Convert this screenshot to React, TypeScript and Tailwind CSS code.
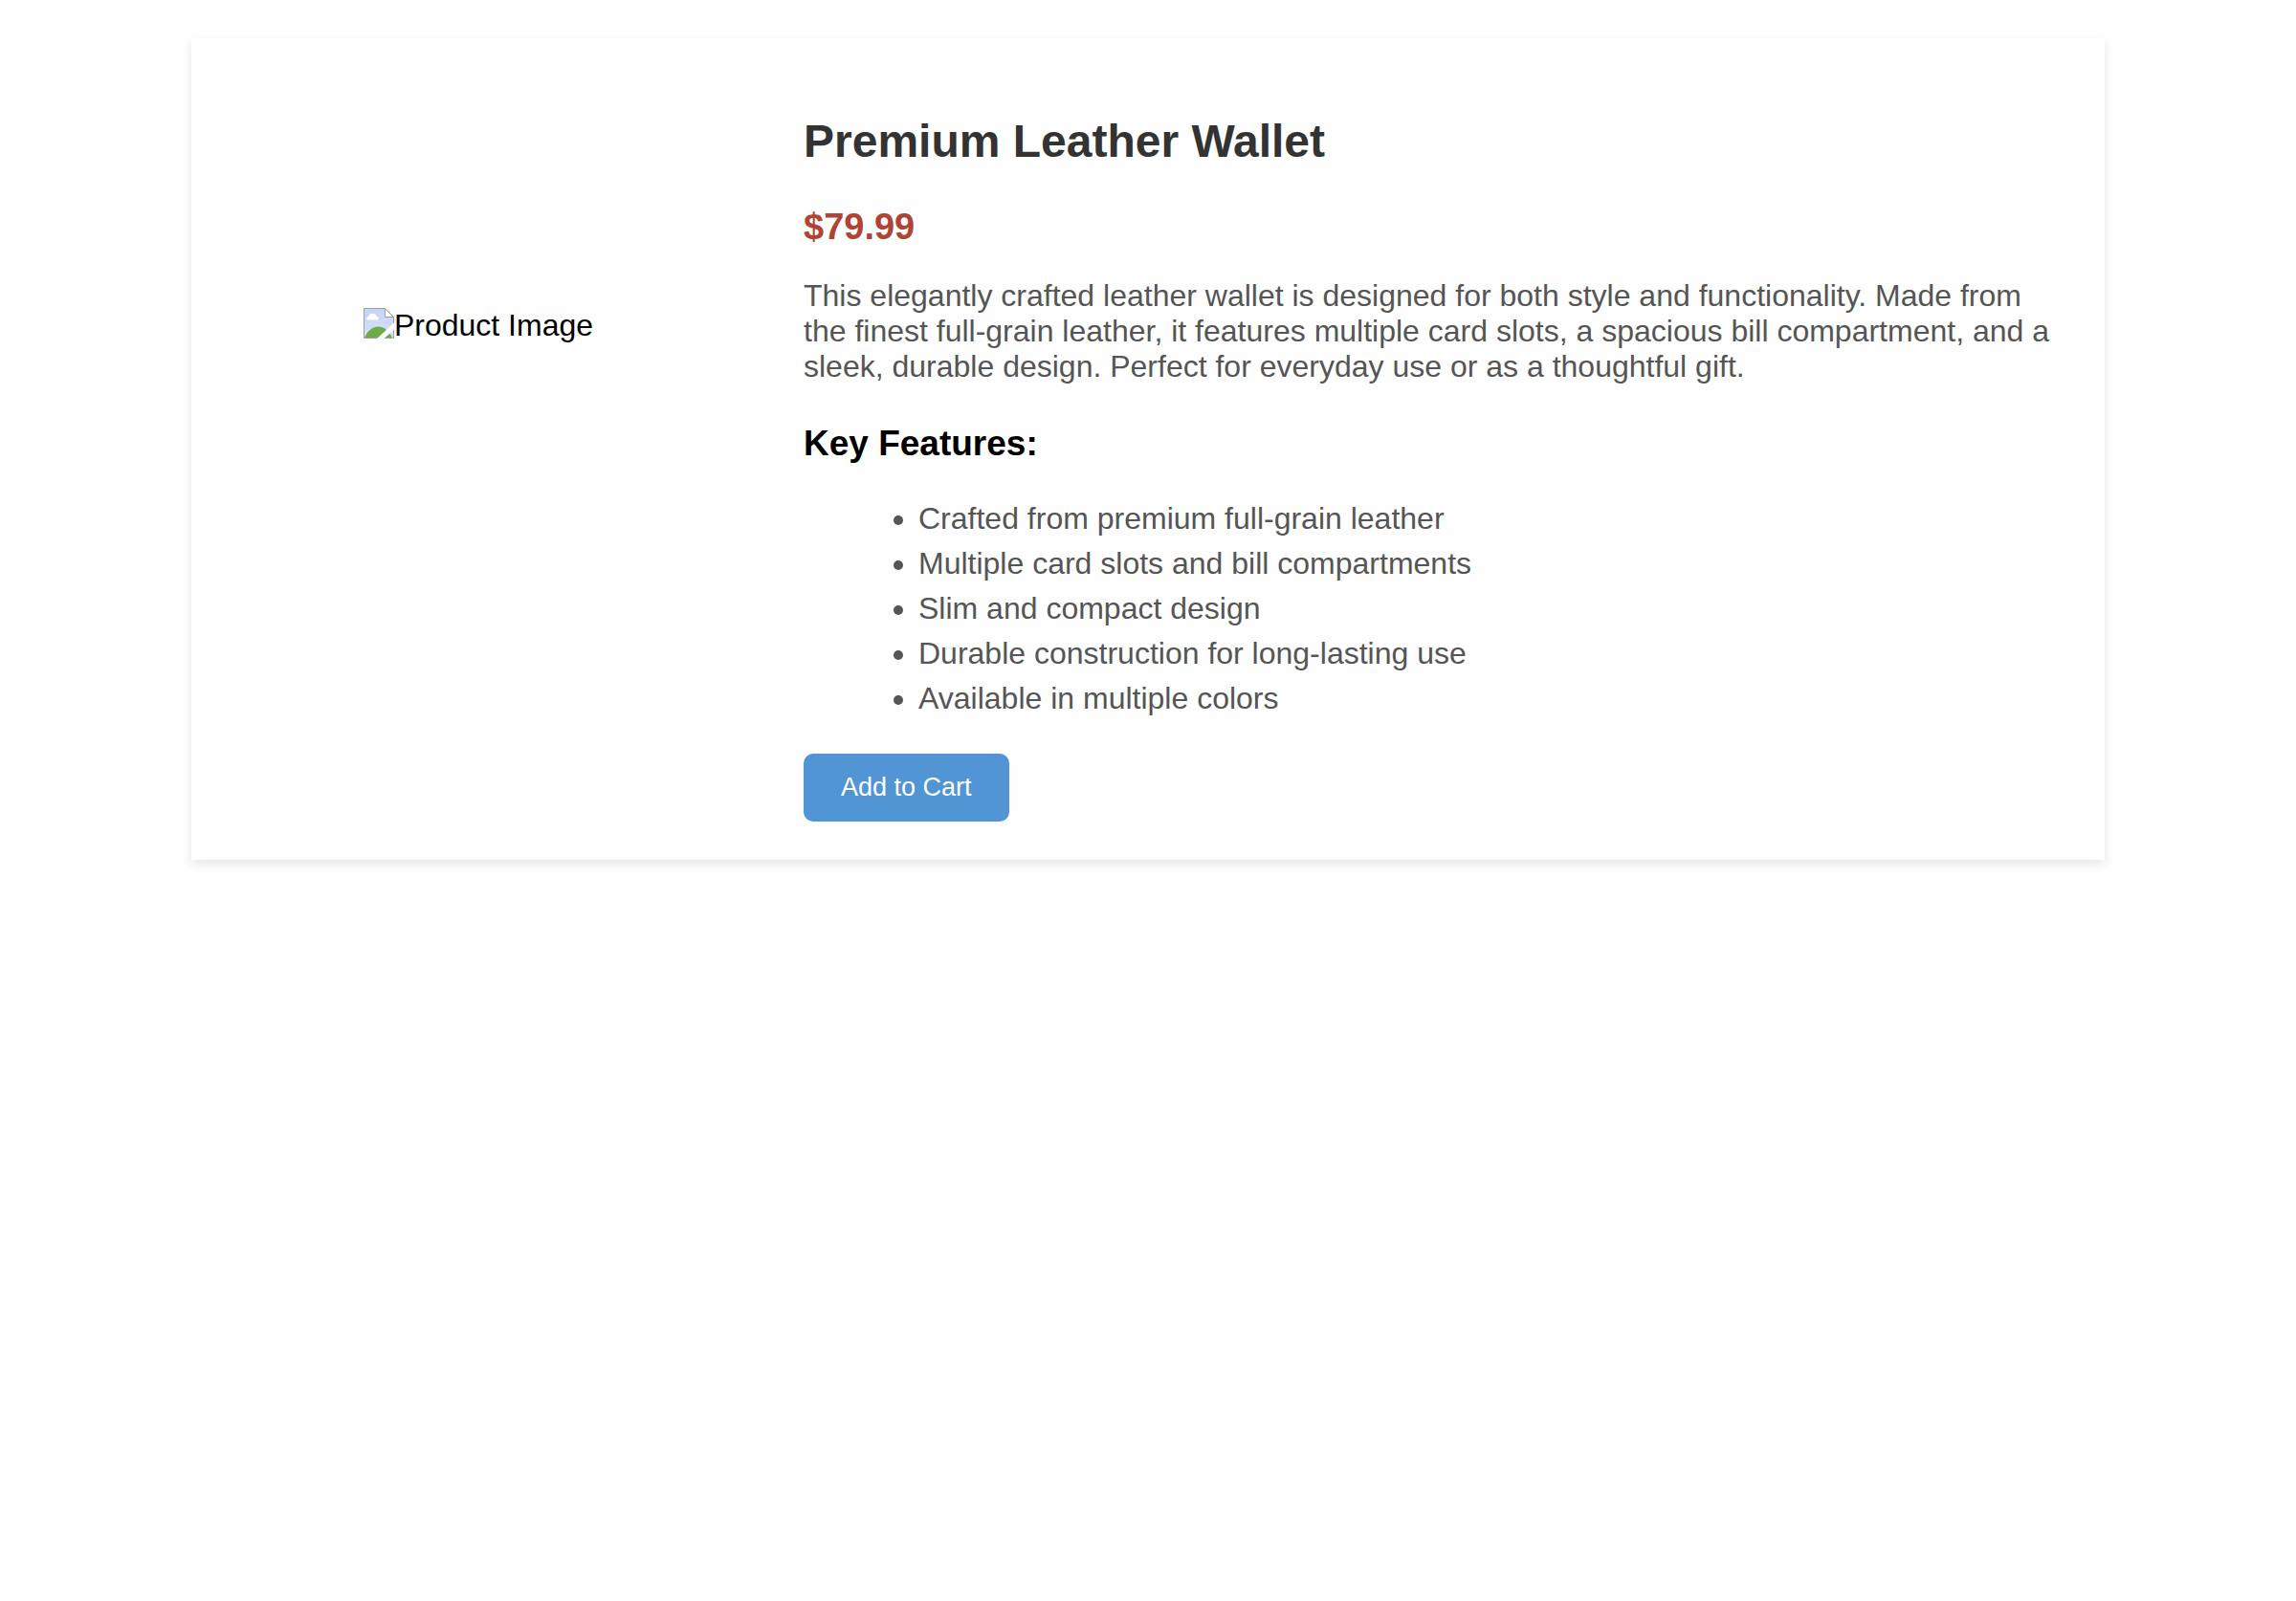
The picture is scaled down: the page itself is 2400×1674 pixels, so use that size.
const features = [
  'Crafted from premium full-grain leather',
  'Multiple card slots and bill compartments',
  'Slim and compact design',
  'Durable construction for long-lasting use',
  'Available in multiple colors',
];

function ImagePlaceholderIcon() {
  return (
    <svg className="size-8 shrink-0" viewBox="0 0 32 32" aria-hidden="true">
      <defs>
        <linearGradient id="sky" x1="0" y1="0" x2="0" y2="1">
          <stop offset="0" stopColor="#c5d5f4" />
          <stop offset="1" stopColor="#d6e1fa" />
        </linearGradient>
        <clipPath id="sheet">
          <path d="M1 1H22.5L31 9.5V31H1Z" />
        </clipPath>
      </defs>
      <path d="M0.5 0.5H22.5L31.5 9.5V31.5H0.5Z" fill="#fff" stroke="#a0a0a0" />
      <g clipPath="url(#sheet)">
        <path d="M1 1H22.5V9.5H31V31H1Z" fill="url(#sky)" />
        <path
          d="M5 12.5C2.8 12.5 2.8 9.4 5.2 9.2C5.6 6.8 7.6 5.6 9.6 5.8C11.6 5.8 13 7 13.4 8.8C16.2 8.8 16.6 12.5 14.2 12.5Z"
          fill="#fff"
        />
        <path d="M1 31C4 24 9.5 19.5 15.5 19.5C21.5 19.5 26.5 24 30 31Z" fill="#70ab4b" />
      </g>
      <path d="M22.5 0.5V9.5H31.5Z" fill="#fff" stroke="#a0a0a0" />
      <path d="M32 15.5L14 32H21.5L32 22.5Z" fill="#fefefe" />
    </svg>
  );
}

export default function App() {
  return (
    <div className="min-h-screen bg-[#fefefe] px-5 py-10 font-['Liberation_Sans',Arial,sans-serif] text-[32px] leading-[37px] text-black">
      <main className="mx-auto flex max-w-[2000px] shadow-[0_4px_10px_rgba(0,0,0,0.1)]">
        <div className="flex w-[30%] shrink-0 items-start justify-center pt-[282px]">
          <div role="img" aria-label="Product Image" className="flex items-start">
            <ImagePlaceholderIcon />
            <span>Product Image</span>
          </div>
        </div>
        <div className="min-w-0 flex-1 px-10 pt-20 pb-10">
          <h1 className="text-[48px] leading-[55px] font-bold text-[#333333]">Premium Leather Wallet</h1>
          <p className="mt-10 text-[38px] leading-[44px] font-bold text-[#b04333]">$79.99</p>
          <p className="mt-8 text-[#555555]">
            This elegantly crafted leather wallet is designed for both style and functionality. Made from the finest
            full-grain leather, it features multiple card slots, a spacious bill compartment, and a sleek, durable
            design. Perfect for everyday use or as a thoughtful gift.
          </p>
          <h2 className="mt-10 text-[37px] leading-[43px] font-bold">Key Features:</h2>
          <ul className="my-[39px] flex list-disc flex-col gap-[10px] pl-[120px] text-[#555555]">
            {features.map((feature) => (
              <li key={feature}>{feature}</li>
            ))}
          </ul>
          <button
            type="button"
            className="rounded-[10px] bg-[#5195d5] px-[39px] py-5 text-[27px] leading-[31px] text-white"
          >
            Add to Cart
          </button>
        </div>
      </main>
    </div>
  );
}
